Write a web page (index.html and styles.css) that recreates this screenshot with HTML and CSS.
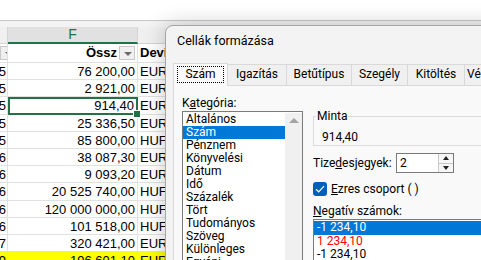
FILE: index.html
```html
<!DOCTYPE html>
<html lang="hu">
<head>
    <meta charset="UTF-8">
    <title>Cellák formázása</title>
    <link rel="stylesheet" href="styles.css">
</head>
<body>
  <div class="topbar"></div>

  <!-- Munkalap -->
  <div class="sheet">
    <div class="colhead stub"></div>
    <div class="colhead col-f">F</div>
    <div class="colhead"></div>

    <div class="cell hdr stub"><span class="filter"></span></div>
    <div class="cell hdr num">Össz <span class="filter"></span></div>
    <div class="cell hdr">Devi</div>

    <div class="cell stub">2025</div><div class="cell num">76 200,00</div><div class="cell">EUR</div>
    <div class="cell stub">2025</div><div class="cell num">2 921,00</div><div class="cell">EUR</div>
    <div class="cell stub">2025</div><div class="cell num selected">914,40</div><div class="cell">EUR</div>
    <div class="cell stub">2025</div><div class="cell num">25 336,50</div><div class="cell">EUR</div>
    <div class="cell stub">2025</div><div class="cell num">85 800,00</div><div class="cell">HUF</div>
    <div class="cell stub">2026</div><div class="cell num">38 087,30</div><div class="cell">EUR</div>
    <div class="cell stub">2026</div><div class="cell num">9 093,20</div><div class="cell">EUR</div>
    <div class="cell stub">2026</div><div class="cell num">20 525 740,00</div><div class="cell">HUF</div>
    <div class="cell stub">2026</div><div class="cell num">120 000 000,00</div><div class="cell">HUF</div>
    <div class="cell stub">2026</div><div class="cell num">101 518,00</div><div class="cell">HUF</div>
    <div class="cell stub">2027</div><div class="cell num">320 421,00</div><div class="cell">EUR</div>
    <div class="cell stub yellow">2029</div><div class="cell num yellow">196 601,10</div><div class="cell yellow">EUR</div>
  </div>

  <!-- Párbeszédablak -->
  <div class="dialog">
    <div class="dlg-title">Cellák formázása</div>

    <div class="tabs">
      <div class="tab active"><span class="focus">Szám</span></div>
      <div class="tab">Igazítás</div>
      <div class="tab">Betűtípus</div>
      <div class="tab">Szegély</div>
      <div class="tab">Kitöltés</div>
      <div class="tab">Védelem</div>
    </div>

    <div class="panel">
      <div class="left">
        <div class="label">K<u>a</u>tegória:</div>
        <div class="listbox">
          <ul class="items">
            <li>Általános</li>
            <li class="sel">Szám</li>
            <li>Pénznem</li>
            <li>Könyvelési</li>
            <li>Dátum</li>
            <li>Idő</li>
            <li>Százalék</li>
            <li>Tört</li>
            <li>Tudományos</li>
            <li>Szöveg</li>
            <li>Különleges</li>
            <li>Egyéni</li>
          </ul>
          <div class="scrollbar"><span class="arrow-up"></span></div>
        </div>
      </div>

      <div class="right">
        <fieldset class="sample">
          <legend>Minta</legend>
          <div class="sample-value">914,40</div>
        </fieldset>

        <div class="decimals">
          <span class="decimals-label">Tize<u>d</u>esjegyek:</span>
          <div class="spin">
            <span class="spin-value">2</span>
            <div class="spin-btns">
              <span class="spin-btn"><span class="tri-up"></span></span>
              <span class="spin-btn"><span class="tri-down"></span></span>
            </div>
          </div>
        </div>

        <div class="check-row">
          <span class="checkbox">
            <svg width="10" height="8" viewBox="0 0 10 8"><path d="M1 4.2 L3.7 6.8 L9 1.2" fill="none" stroke="#fff" stroke-width="1.2"/></svg>
          </span>
          <span><u>E</u>zres csoport ( )</span>
        </div>

        <div class="label"><u>N</u>egatív számok:</div>
        <ul class="neglist">
          <li class="sel">-1 234,10</li>
          <li class="red">1 234,10</li>
          <li>-1 234,10</li>
        </ul>
      </div>
    </div>
  </div>
</body>
</html>
```

FILE: styles.css
```css
* {
  box-sizing: border-box;
}

html,
body {
  height: 100%;
  overflow: hidden;
}

body {
  margin: 0;
  background: #fff;
  position: relative;
  font-family: "Liberation Sans", Arial, sans-serif;
}

.topbar {
  height: 21px;
  background: #fff;
  border-bottom: 1px solid #c8c8c8;
}

/* sheet */
.sheet {
  display: grid;
  grid-template-columns: 8px 130px 80px;
  grid-template-rows: 23px 19px;
  grid-auto-rows: 17.2px;
  background: #f3f3f3;
  font-size: 13px;
}

.colhead {
  margin-top: 6px;
  background: #f0f0f0;
  border-right: 1px solid #d4d4d4;
  border-bottom: 1px solid #d4d4d4;
}

.col-f {
  background: #e1e1e1;
  border-bottom: 2px solid #217346;
  color: #217346;
  text-align: center;
  font-size: 14px;
  line-height: 15px;
}

.cell {
  background: #fff;
  border-right: 1px solid #e1e1e1;
  border-bottom: 1px solid #e1e1e1;
  white-space: nowrap;
  overflow: hidden;
  line-height: 17px;
  padding: 0 2px;
}

.num {
  text-align: right;
  padding-right: 2px;
  position: relative;
}

.stub {
  text-align: right;
  padding: 0 1px 0 0;
  direction: rtl;
}

.hdr {
  font-weight: bold;
  line-height: 18px;
  display: flex;
  align-items: center;
}

.hdr.num {
  justify-content: flex-end;
  gap: 2px;
}

.hdr.stub {
  justify-content: flex-end;
}

.filter {
  display: inline-block;
  width: 16px;
  height: 14px;
  background: #f0f0f0;
  border: 1px solid #c8c8c8;
  position: relative;
  flex: none;
}

.filter::after {
  content: "";
  position: absolute;
  left: 4px;
  top: 5px;
  border-left: 4px solid transparent;
  border-right: 4px solid transparent;
  border-top: 4px solid #6b6b6b;
}

.hdr.stub .filter {
  margin-right: 1px;
}

.selected {
  overflow: visible;
  border: 2px solid #217346;
  line-height: 14px;
  z-index: 1;
}

.selected::after {
  content: "";
  position: absolute;
  right: -5px;
  bottom: -5px;
  width: 6px;
  height: 6px;
  background: #217346;
  border: 1px solid #fff;
}

.yellow {
  background: #ffff00;
}

/* dialog */
.dialog {
  position: absolute;
  left: 165px;
  top: 25px;
  width: 370px;
  height: 260px;
  background: #f3f3f3;
  border: 1px solid #a6a6a6;
  border-radius: 8px 0 0 0;
  box-shadow: 0 0 22px rgba(0, 0, 0, 0.22);
  font-family: Roboto, "Noto Sans", sans-serif;
  font-size: 12px;
  color: #000;
}

.dlg-title {
  height: 37px;
  padding: 7px 0 0 11px;
  line-height: 16px;
  font-size: 12.5px;
}

.tabs {
  display: flex;
  align-items: flex-end;
  padding-left: 7px;
  height: 22px;
}

.tab {
  flex: none;
  height: 21px;
  line-height: 19px;
  text-align: center;
  background: #f0f0f0;
  border: 1px solid #d9d9d9;
  border-left: none;
  border-bottom: none;
  white-space: nowrap;
}

.tab:nth-child(2) { width: 59px; }
.tab:nth-child(3) { width: 65px; }
.tab:nth-child(4) { width: 56px; }
.tab:nth-child(5) { width: 57px; }
.tab:nth-child(6) { width: 62px; padding-left: 2px; text-align: left; }

.tab.active {
  width: 55px;
  height: 23px;
  margin-bottom: -1px;
  background: #f9f9f9;
  border-left: 1px solid #d9d9d9;
  padding: 2px 3px;
  position: relative;
  z-index: 1;
}

.focus {
  display: block;
  height: 17px;
  line-height: 15px;
  border: 1px dotted #000;
  text-align: center;
}

.panel {
  display: flex;
  gap: 10px;
  margin-left: 7px;
  height: 200px;
  padding: 9px 0 0 8px;
  background: #f9f9f9;
  border-top: 1px solid #d9d9d9;
  border-left: 1px solid #d9d9d9;
}

.label {
  height: 16px;
  line-height: 16px;
}

.left {
  width: 121px;
  flex: none;
}

.listbox {
  display: flex;
  height: 160px;
  background: #fff;
  border: 1px solid #7a7a7a;
  padding: 1px 0 0 0;
}

.items,
.neglist {
  list-style: none;
  margin: 0;
  padding: 0;
}

.items {
  flex: 1;
  overflow: hidden;
}

.items li,
.neglist li {
  height: 13px;
  line-height: 13px;
  padding-left: 3px;
  white-space: nowrap;
}

.sel {
  background: #0078d7;
  color: #fff;
}

.scrollbar {
  width: 17px;
  background: #f0f0f0;
  position: relative;
}

.arrow-up {
  position: absolute;
  left: 4px;
  top: 5px;
  border-left: 5px solid transparent;
  border-right: 5px solid transparent;
  border-bottom: 5px solid #a3a3a3;
}

.right {
  flex: 1;
  padding-top: 14px;
}

.sample {
  margin: 0;
  height: 37px;
  padding: 6px 0 0 8px;
  border: 1px solid #dcdcdc;
  border-right: none;
}

.sample legend {
  padding: 0 1px;
  margin-left: -6px;
  line-height: 14px;
}

.sample-value {
  line-height: 16px;
}

.decimals {
  display: flex;
  align-items: center;
  margin-top: 6px;
  height: 22px;
}

.decimals-label {
  width: 83px;
}

.spin {
  display: flex;
  width: 58px;
  height: 20px;
  background: #fff;
  border: 1px solid #7a7a7a;
}

.spin-value {
  flex: 1;
  padding-left: 3px;
  line-height: 18px;
}

.spin-btns {
  display: flex;
  flex-direction: column;
  width: 15px;
  border-left: 1px solid #c8c8c8;
}

.spin-btn {
  flex: 1;
  display: flex;
  align-items: center;
  justify-content: center;
  background: #f7f7f7;
}

.spin-btn + .spin-btn {
  border-top: 1px solid #c8c8c8;
}

.tri-up {
  border-left: 3px solid transparent;
  border-right: 3px solid transparent;
  border-bottom: 4px solid #222;
}

.tri-down {
  border-left: 3px solid transparent;
  border-right: 3px solid transparent;
  border-top: 4px solid #222;
}

.check-row {
  display: flex;
  align-items: center;
  gap: 4px;
  margin-top: 6px;
  height: 18px;
  margin-bottom: 5px;
}

.checkbox {
  width: 14px;
  height: 14px;
  background: #005fb8;
  border-radius: 3px;
  display: flex;
  align-items: center;
  justify-content: center;
}

.neglist {
  margin-top: 0;
  height: 60px;
  background: #fff;
  border: 1px solid #7a7a7a;
  border-right: none;
  padding-top: 1px;
}

.neglist li {
  height: 13px;
  line-height: 13px;
  padding-left: 3px;
}

.neglist li.sel {
  height: 14px;
}

.red {
  color: #ff0000;
}
```
